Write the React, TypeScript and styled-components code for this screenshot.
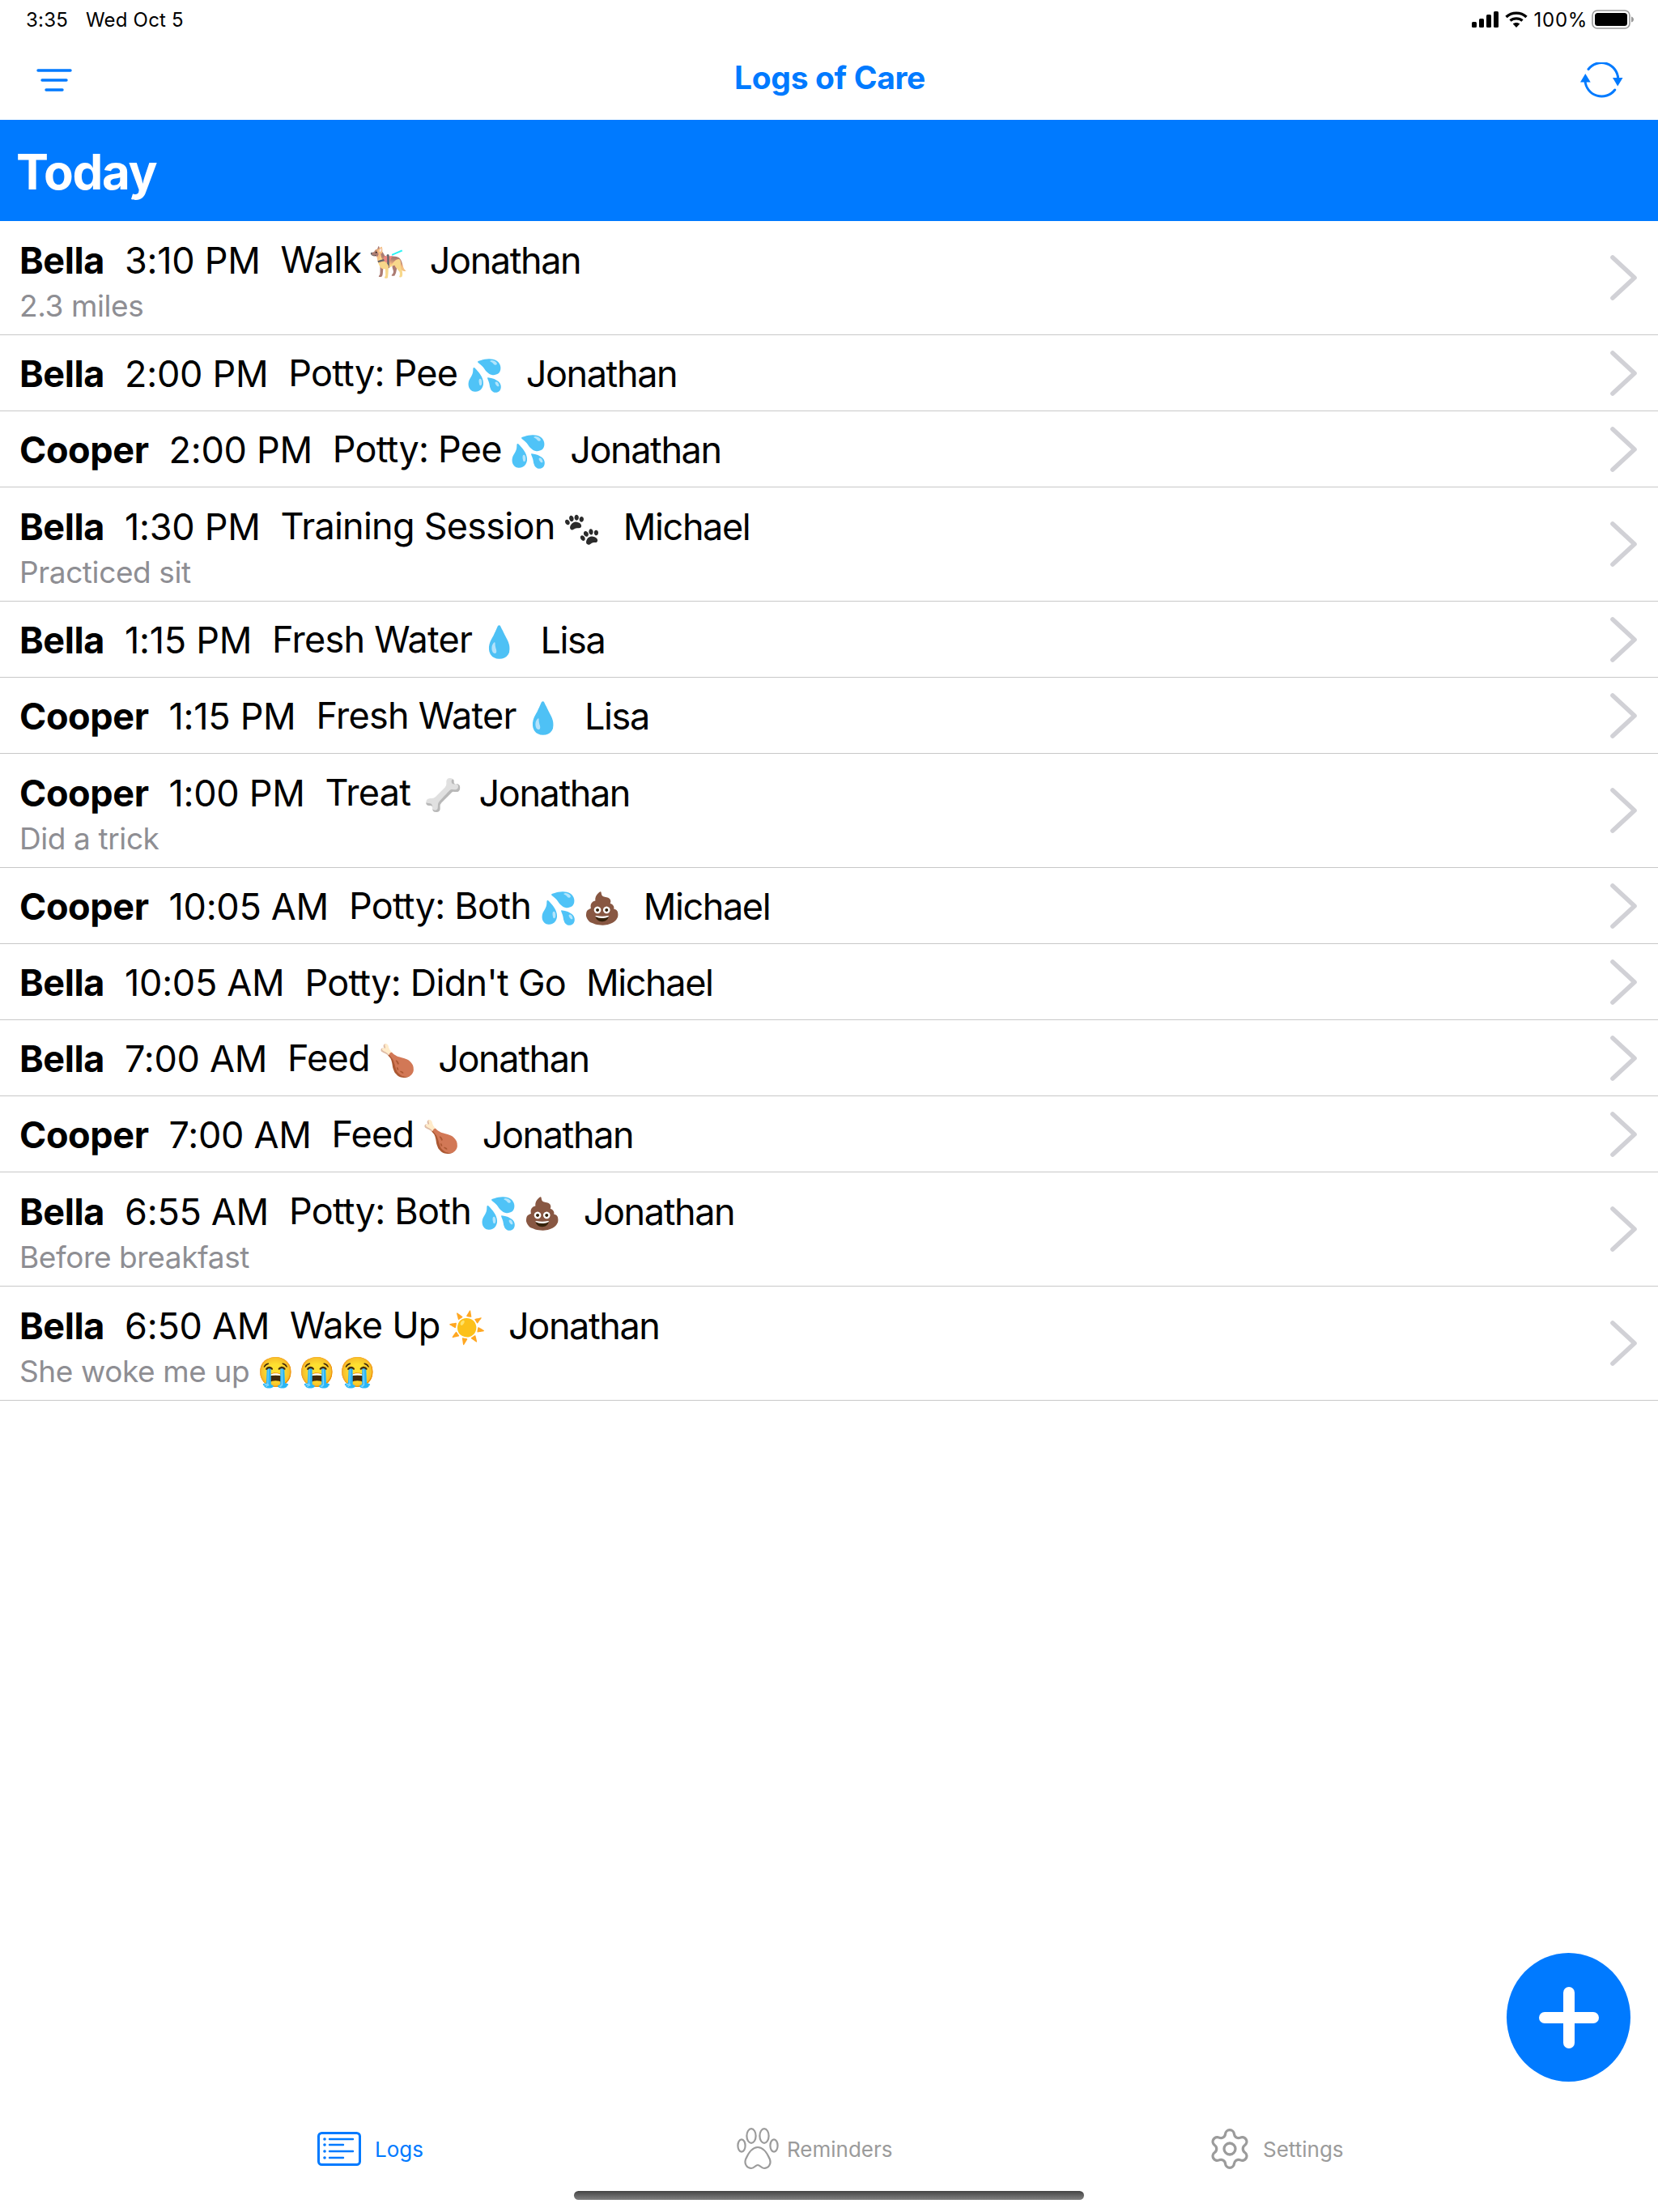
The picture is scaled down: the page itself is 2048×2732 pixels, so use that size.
import React from "react";
import styled, { createGlobalStyle } from "styled-components";
import { Settings } from "lucide-react";

const BLUE = "#007aff";
const FONT = `Inter, "Noto Color Emoji", "Liberation Sans", sans-serif`;

const GlobalStyle = createGlobalStyle`
  html, body {
    margin: 0;
    padding: 0;
    background: #fff;
    font-family: ${FONT};
  }
`;

const Screen = styled.div`
  position: relative;
  width: 2048px;
  height: 2732px;
  display: flex;
  flex-direction: column;
  overflow: hidden;
  background: #fff;
`;

const StatusBar = styled.div`
  height: 48px;
  padding: 0 30px 0 32px;
  display: flex;
  align-items: center;
  justify-content: space-between;
  font-size: 24px;
  letter-spacing: 0.2px;
  color: #000;
`;

const StatusGroup = styled.div<{ $gap: number }>`
  display: flex;
  align-items: center;
  gap: ${(p) => p.$gap}px;
`;

const BatteryPercent = styled.span`
  margin-right: -3px;
  letter-spacing: 0.7px;
`;

const NavBar = styled.div`
  height: 100px;
  padding: 0 43px 6px 45px;
  box-sizing: border-box;
  display: flex;
  align-items: center;
  justify-content: space-between;
`;

const NavSlot = styled.div<{ $end?: boolean }>`
  width: 60px;
  padding-top: 7px;
  display: flex;
  justify-content: ${(p) => (p.$end ? "flex-end" : "flex-start")};
`;

const NavTitle = styled.div`
  font-size: 39px;
  font-weight: 700;
  color: ${BLUE};
  letter-spacing: -0.35px;
`;

const SectionHeader = styled.div`
  height: 125px;
  box-sizing: border-box;
  padding: 3px 0 0 20px;
  display: flex;
  align-items: center;
  background: ${BLUE};
  color: #fff;
  font-size: 60px;
  font-weight: 700;
  letter-spacing: -1.3px;
`;

const List = styled.div`
  flex: 1;
`;

const Row = styled.div<{ $tall: boolean }>`
  height: ${(p) => (p.$tall ? 140 : 93)}px;
  padding: 0 24px;
  display: flex;
  align-items: center;
  justify-content: space-between;
  border-bottom: 1px solid #c8c8c8;
`;

const RowBody = styled.div<{ $tall: boolean }>`
  padding-top: ${(p) => (p.$tall ? 8 : 2)}px;
  display: flex;
  flex-direction: column;
  gap: 5px;
`;

const RowLine = styled.div`
  display: flex;
  align-items: center;
  gap: 25px;
  font-size: 45px;
  line-height: 54px;
  color: #000;
`;

const PetName = styled.span`
  font-weight: 700;
  letter-spacing: -0.4px;
`;

const TimeText = styled.span`
  letter-spacing: -0.3px;
`;

const ActivityText = styled.span`
  letter-spacing: -0.75px;
`;

const PersonText = styled.span`
  letter-spacing: -1.4px;
`;

const Emoji = styled.span<{ $tone?: string; $flip?: boolean }>`
  display: inline-block;
  margin: 0 -5px 0 10px;
  font-size: 38px;
  letter-spacing: 7px;
  ${(p) => p.$tone && `filter: ${p.$tone};`}
  ${(p) => p.$flip && "transform: scaleX(-1);"}
`;

const NoteEmoji = styled.span`
  margin-left: 10px;
  font-size: 36px;
  letter-spacing: 6px;
`;

const Note = styled.div`
  font-size: 37px;
  line-height: 46px;
  letter-spacing: -0.4px;
  color: #8e8e93;
`;

const TabBar = styled.div`
  height: 130px;
  padding-left: 392px;
  display: grid;
  grid-template-columns: 518px 581px auto;
  align-items: start;
  justify-content: start;
`;

const Tab = styled.div<{ $active?: boolean; $gap: number }>`
  display: flex;
  align-items: center;
  gap: ${(p) => p.$gap}px;
  height: 104px;
  font-size: 26px;
  color: ${(p) => (p.$active ? BLUE : "#9b9b9b")};
`;

const HomeIndicator = styled.div`
  position: absolute;
  left: 709px;
  bottom: 15px;
  width: 630px;
  height: 11px;
  border-radius: 6px;
  background: linear-gradient(#444, #808080);
`;

const Fab = styled.button`
  position: absolute;
  right: 34px;
  top: 2412px;
  width: 153px;
  height: 159px;
  padding: 0;
  border: none;
  border-radius: 50%;
  background: ${BLUE};
  display: flex;
  align-items: center;
  justify-content: center;
`;

const Chevron = () => (
  <svg width="36" height="58" viewBox="0 0 36 58" fill="none">
    <path d="M4 4 L31 29 L4 54" stroke="#d1d1d6" strokeWidth="5.6" strokeLinecap="round" strokeLinejoin="round" />
  </svg>
);

const SignalIcon = () => (
  <svg width="33" height="20" viewBox="0 0 33 20" fill="#000">
    <rect x="0" y="13" width="6" height="7" rx="1.5" />
    <rect x="9" y="9" width="6" height="11" rx="1.5" />
    <rect x="18" y="4" width="6" height="16" rx="1.5" />
    <rect x="27" y="0" width="6" height="20" rx="1.5" />
  </svg>
);

const WifiIcon = () => (
  <svg width="28" height="20" viewBox="0 0 28 20" fill="none" stroke="#000" strokeWidth="3.4">
    <path d="M1.5 7 C8.5 0.5 19.5 0.5 26.5 7" />
    <path d="M6.5 11.5 C10.5 8 17.5 8 21.5 11.5" />
    <path d="M14 20 L9.8 15.6 C12 13.6 16 13.6 18.2 15.6 Z" fill="#000" stroke="none" />
  </svg>
);

const BatteryIcon = () => (
  <svg width="52" height="24" viewBox="0 0 52 24">
    <rect x="1" y="1" width="46" height="22" rx="6" fill="none" stroke="#9a9a9a" strokeWidth="1.6" />
    <rect x="4" y="4" width="40" height="16" rx="3.5" fill="#000" />
    <path d="M49 8.5 C51 9 52 10.5 52 12 C52 13.5 51 15 49 15.5 Z" fill="#9a9a9a" />
  </svg>
);

const MenuIcon = () => (
  <svg width="44" height="28" viewBox="0 0 44 28" fill="none" stroke={BLUE} strokeWidth="3.4" strokeLinecap="round">
    <path d="M2 2 H42" />
    <path d="M7 14 H37" />
    <path d="M12 26 H32" />
  </svg>
);

const SyncIcon = () => (
  <svg width="53" height="44" viewBox="0 0 53 44" fill="none">
    <path d="M10 8.5 A20.5 20.5 0 0 1 46.7 20" stroke={BLUE} strokeWidth="3" strokeLinecap="round" />
    <path d="M42.7 34 A20.5 20.5 0 0 1 6 23" stroke={BLUE} strokeWidth="3" strokeLinecap="round" />
    <path d="M40 19 H52.5 L46.2 29.5 Z" fill={BLUE} />
    <path d="M0 24.5 H12.7 L6.3 14 Z" fill={BLUE} />
  </svg>
);

const LogsIcon = () => (
  <svg width="54" height="42" viewBox="0 0 54 42" fill="none" stroke={BLUE}>
    <rect x="1.5" y="1.5" width="51" height="39" rx="4" strokeWidth="3" />
    <g strokeWidth="2.4" strokeLinecap="round">
      <path d="M15 9 H44" />
      <path d="M15 16 H32" />
      <path d="M15 24 H44" />
      <path d="M15 32 H32" />
    </g>
    <g fill={BLUE} stroke="none">
      <circle cx="9" cy="9" r="1.8" />
      <circle cx="9" cy="16" r="1.8" />
      <circle cx="9" cy="24" r="1.8" />
      <circle cx="9" cy="32" r="1.8" />
    </g>
  </svg>
);

const PawIcon = () => (
  <svg width="52" height="52" viewBox="0 0 52 52" fill="none" stroke="#9b9b9b" strokeWidth="2.2">
    <ellipse cx="6" cy="22" rx="4.6" ry="7.6" />
    <ellipse cx="18" cy="10" rx="5.6" ry="8.8" />
    <ellipse cx="34" cy="10" rx="5.6" ry="8.8" />
    <ellipse cx="46" cy="22" rx="4.6" ry="7.6" />
    <path d="M26 24 C33 24 38 32 41 39 C43 45 39 50 34 50 C30 50 29 46 26 46 C23 46 22 50 18 50 C13 50 9 45 11 39 C14 32 19 24 26 24 Z" />
  </svg>
);

const PlusIcon = () => (
  <svg width="74" height="76" viewBox="0 0 74 76" fill="#fff">
    <rect x="30" y="0" width="14" height="76" rx="7" />
    <rect x="0" y="31" width="74" height="14" rx="7" />
  </svg>
);

// Noto draws a few of these differently from the device, so they get nudged
const GUIDE_DOG = { $tone: "brightness(1.35) saturate(0.8)" };
const PAWS = { $tone: "grayscale(1) brightness(0.45)" };
const BONE = { $tone: "grayscale(1) brightness(0.95)", $flip: true };

type LogEntry = {
  pet: string;
  time: string;
  activity: string;
  emoji?: string;
  emojiProps?: { $tone?: string; $flip?: boolean };
  person: string;
  note?: string;
  noteEmoji?: string;
};

const logs: LogEntry[] = [
  { pet: "Bella", time: "3:10 PM", activity: "Walk", emoji: "🐕‍🦺", emojiProps: GUIDE_DOG, person: "Jonathan", note: "2.3 miles" },
  { pet: "Bella", time: "2:00 PM", activity: "Potty: Pee", emoji: "💦", person: "Jonathan" },
  { pet: "Cooper", time: "2:00 PM", activity: "Potty: Pee", emoji: "💦", person: "Jonathan" },
  { pet: "Bella", time: "1:30 PM", activity: "Training Session", emoji: "🐾", emojiProps: PAWS, person: "Michael", note: "Practiced sit" },
  { pet: "Bella", time: "1:15 PM", activity: "Fresh Water", emoji: "💧", person: "Lisa" },
  { pet: "Cooper", time: "1:15 PM", activity: "Fresh Water", emoji: "💧", person: "Lisa" },
  { pet: "Cooper", time: "1:00 PM", activity: "Treat", emoji: "🦴", emojiProps: BONE, person: "Jonathan", note: "Did a trick" },
  { pet: "Cooper", time: "10:05 AM", activity: "Potty: Both", emoji: "💦💩", person: "Michael" },
  { pet: "Bella", time: "10:05 AM", activity: "Potty: Didn't Go", person: "Michael" },
  { pet: "Bella", time: "7:00 AM", activity: "Feed", emoji: "🍗", person: "Jonathan" },
  { pet: "Cooper", time: "7:00 AM", activity: "Feed", emoji: "🍗", person: "Jonathan" },
  { pet: "Bella", time: "6:55 AM", activity: "Potty: Both", emoji: "💦💩", person: "Jonathan", note: "Before breakfast" },
  { pet: "Bella", time: "6:50 AM", activity: "Wake Up", emoji: "☀️", person: "Jonathan", note: "She woke me up", noteEmoji: "😭😭😭" },
];

const App = () => {
  return (
    <Screen>
      <GlobalStyle />
      <StatusBar>
        <StatusGroup $gap={22}>
          <span>3:35</span>
          <span>Wed Oct 5</span>
        </StatusGroup>
        <StatusGroup $gap={8}>
          <SignalIcon />
          <WifiIcon />
          <BatteryPercent>100%</BatteryPercent>
          <BatteryIcon />
        </StatusGroup>
      </StatusBar>
      <NavBar>
        <NavSlot>
          <MenuIcon />
        </NavSlot>
        <NavTitle>Logs of Care</NavTitle>
        <NavSlot $end>
          <SyncIcon />
        </NavSlot>
      </NavBar>
      <SectionHeader>Today</SectionHeader>
      <List>
        {logs.map((log, i) => (
          <Row key={i} $tall={!!log.note}>
            <RowBody $tall={!!log.note}>
              <RowLine>
                <PetName>{log.pet}</PetName>
                <TimeText>{log.time}</TimeText>
                <ActivityText>
                  {log.activity}
                  {log.emoji && <Emoji {...log.emojiProps}>{log.emoji}</Emoji>}
                </ActivityText>
                <PersonText>{log.person}</PersonText>
              </RowLine>
              {log.note && (
                <Note>
                  {log.note}
                  {log.noteEmoji && <NoteEmoji>{log.noteEmoji}</NoteEmoji>}
                </Note>
              )}
            </RowBody>
            <Chevron />
          </Row>
        ))}
      </List>
      <TabBar>
        <Tab $active $gap={17}>
          <LogsIcon />
          <span>Logs</span>
        </Tab>
        <Tab $gap={10}>
          <PawIcon />
          <span>Reminders</span>
        </Tab>
        <Tab $gap={13}>
          <Settings size={56} strokeWidth={1.4} />
          <span>Settings</span>
        </Tab>
      </TabBar>
      <Fab>
        <PlusIcon />
      </Fab>
      <HomeIndicator />
    </Screen>
  );
};

export default App;
